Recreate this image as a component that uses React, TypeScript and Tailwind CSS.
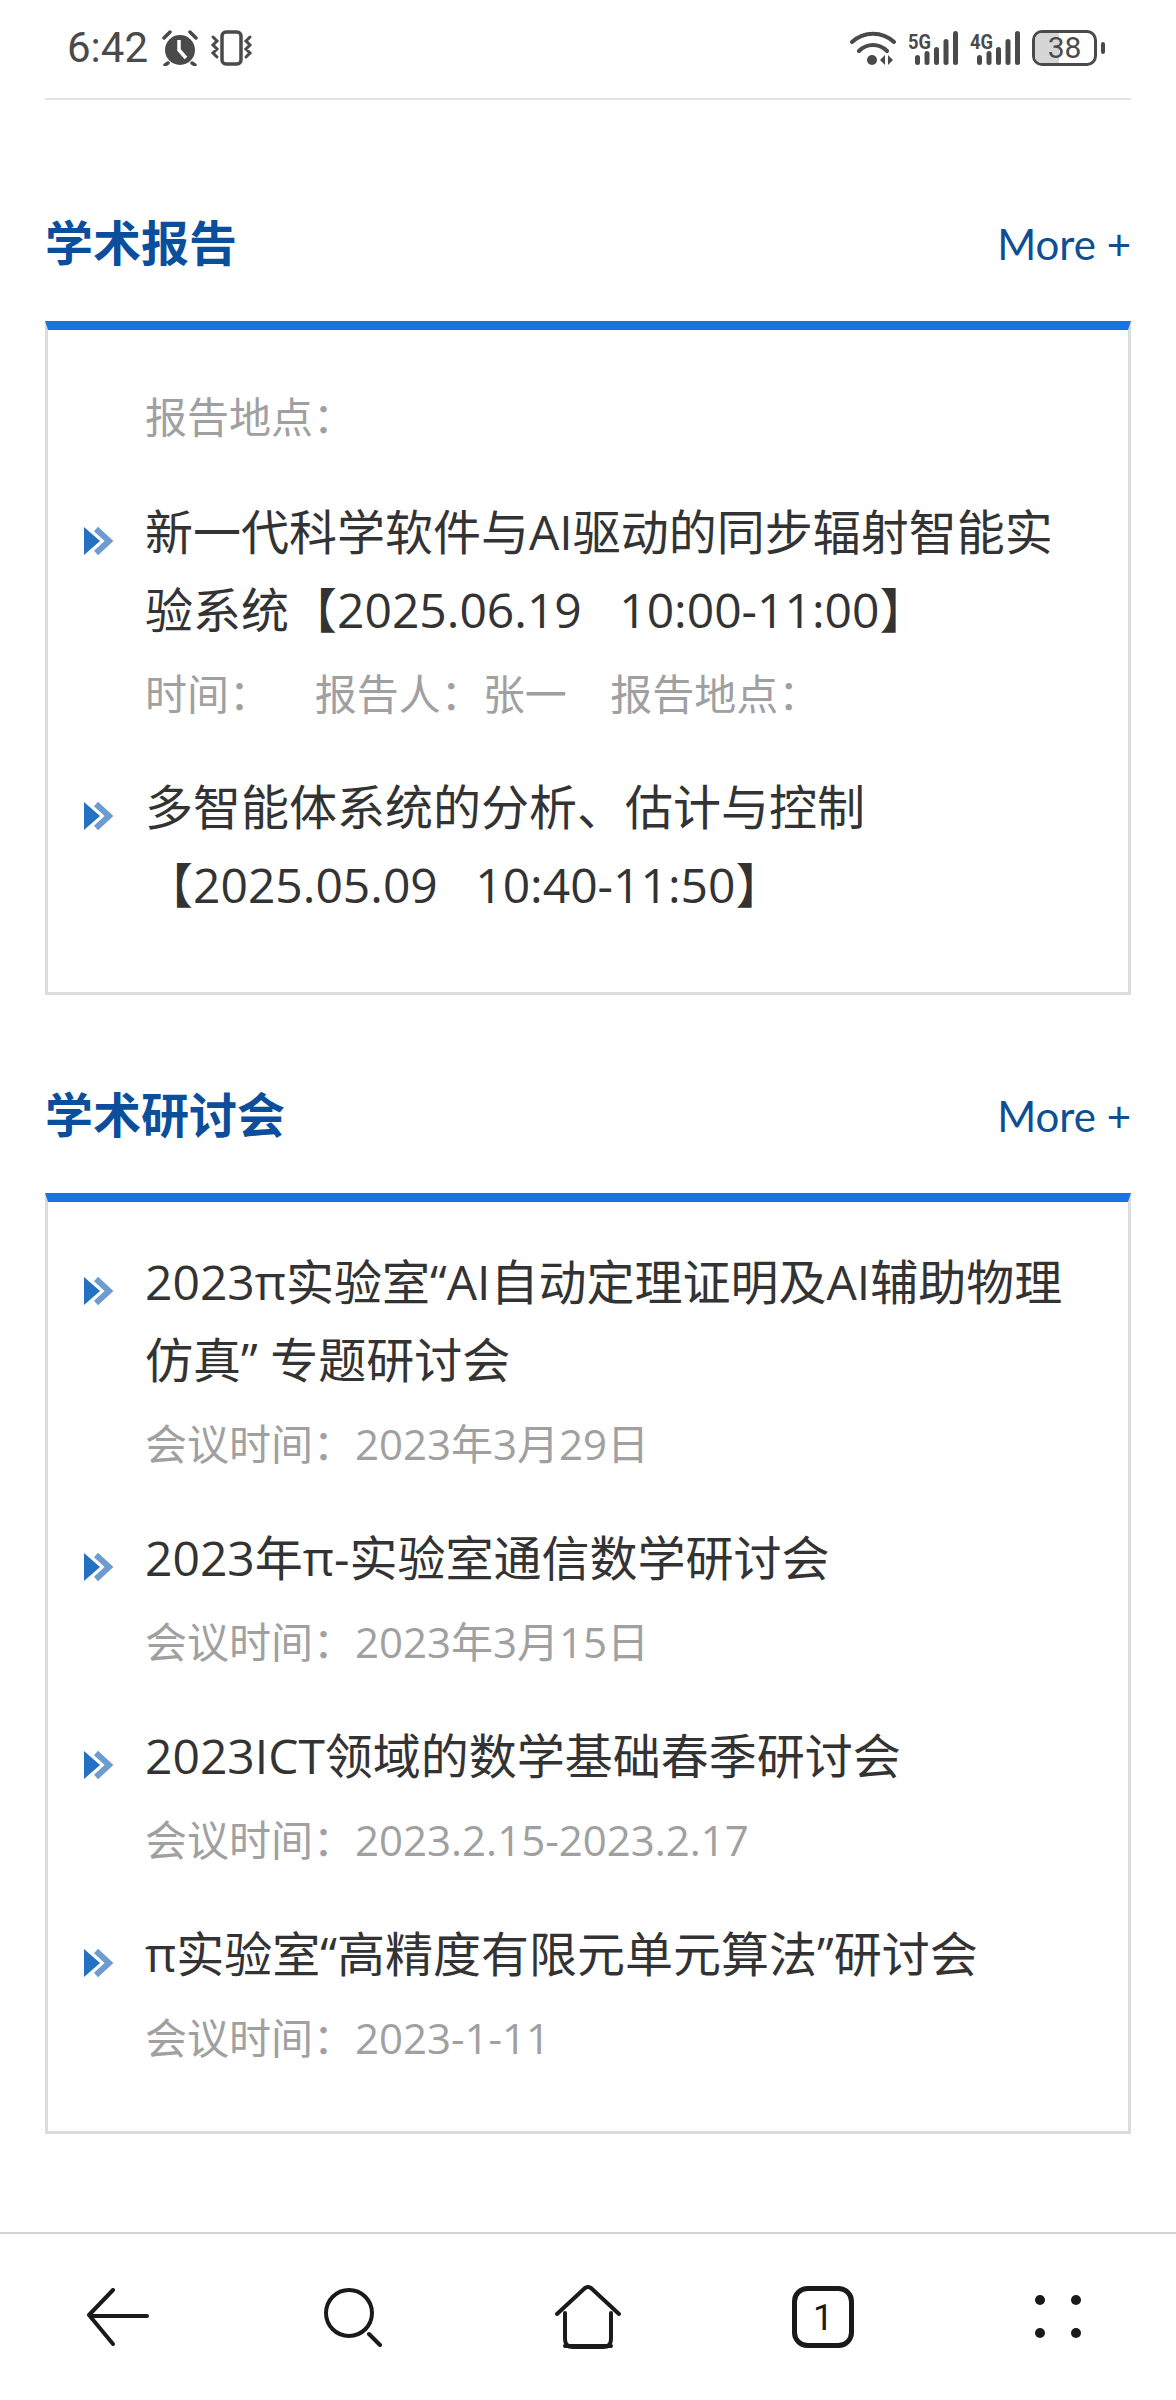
const cjk = "font-['Open_Sans','Noto_Sans_CJK_SC',sans-serif]";

function Bullet() {
  return (
    <svg width="32" height="30" viewBox="0 0 32 30" className="shrink-0 mt-[33px]">
      <path d="M2 1 L18 15 L2 29 Z" fill="#2470c2" />
      <path d="M14 3 L27 15 L14 27" fill="none" stroke="#6f9cd0" strokeWidth="6" />
    </svg>
  );
}

function Bars({ label }: { label: string }) {
  return (
    <svg width="50" height="36" viewBox="0 0 50 36" fill="#4a4a4a">
      <text x="0" y="19" fontSize="20" fontWeight="700" fontFamily="Roboto, sans-serif" textLength="23" lengthAdjust="spacingAndGlyphs">{label}</text>
      <rect x="7" y="25" width="5" height="10" rx="2.5" />
      <rect x="16.5" y="21" width="5" height="14" rx="2.5" />
      <rect x="26" y="17" width="5" height="18" rx="2.5" />
      <rect x="35.5" y="9" width="5" height="26" rx="2.5" />
      <rect x="45" y="1" width="5" height="34" rx="2.5" />
    </svg>
  );
}

function StatusBar() {
  return (
    <div className="mx-[45px] h-[100px] border-b-2 border-[#e3e3e3] flex items-center justify-between pl-[22px] pr-[26px] pb-[2px]">
      <div className="flex items-center">
        <span className="font-['Roboto',sans-serif] text-[42px] leading-none text-[#4a4a4a] w-[94px]">6:42</span>
        <svg width="38" height="36" viewBox="0 0 38 36" className="shrink-0">
          <circle cx="19" cy="20" r="15" fill="#4a4a4a" />
          <path d="M18 10 V20 L25 28" fill="none" stroke="#fff" strokeWidth="3.5" />
          <path d="M3 8 L9 2 M35 8 L29 2 M7 33 L4 35 M31 33 L34 35" stroke="#4a4a4a" strokeWidth="3.5" strokeLinecap="round" />
        </svg>
        <svg width="44" height="36" viewBox="0 0 44 36" className="ml-[11px] shrink-0">
          <rect x="12" y="2" width="19" height="32" rx="4" fill="none" stroke="#4a4a4a" strokeWidth="3.5" />
          <path d="M3 7 L7 11 L3 15 L7 19 L3 23 L7 27 M40 7 L36 11 L40 15 L36 19 L40 23 L36 27" fill="none" stroke="#4a4a4a" strokeWidth="3" strokeLinecap="round" />
        </svg>
      </div>
      <div className="flex items-center">
        <svg width="46" height="36" viewBox="0 0 46 36">
          <path d="M2 12 C14 1 32 1 44 12 M9 21 C17 13 29 13 37 21" fill="none" stroke="#4a4a4a" strokeWidth="4" strokeLinecap="round" />
          <circle cx="22" cy="30" r="5" fill="#4a4a4a" />
          <path d="M35 25 L30 30 L35 35 Z M38 25 L43 30 L38 35 Z" fill="#4a4a4a" />
        </svg>
        <div className="ml-[12px]"><Bars label="5G" /></div>
        <div className="ml-[12px]"><Bars label="4G" /></div>
        <div className="ml-[12px] relative w-[65px] h-[36px] rounded-[10px] border-[3px] border-[#4a4a4a] overflow-hidden flex items-center justify-center">
          <div className="absolute left-0 top-0 bottom-0 w-[24px] bg-[#d6d6d6]" />
          <span className="relative font-['Roboto',sans-serif] text-[30px] leading-none text-[#4a4a4a]">38</span>
        </div>
        <div className="ml-[4px] w-[4px] h-[12px] rounded-full bg-[#4a4a4a]" />
      </div>
    </div>
  );
}

function Section({ title, className, children }: { title: string; className: string; children: React.ReactNode }) {
  return (
    <section className={"mx-[45px] " + className}>
      <div className="h-[154px] flex items-center justify-between">
        <h2 className="text-[48px] font-bold text-[#0b4e9b] leading-none -mt-[3px]">{title}</h2>
        <a className="font-['Lato',sans-serif] text-[42px] leading-none text-[#0d4f93]">More +</a>
      </div>
      {children}
    </section>
  );
}

function Item({ title, meta }: { title: string; meta?: string }) {
  return (
    <div className="flex gap-[31px]">
      <Bullet />
      <div className="min-w-0 flex-1">
        <div className="text-[48px] leading-[78px] text-[#333] whitespace-pre-wrap">{title}</div>
        {meta && <div className="mt-[15px] text-[42px] leading-[60px] text-[#a0a0a0] whitespace-pre">{meta}</div>}
      </div>
    </div>
  );
}

function BottomNav() {
  return (
    <div className="mt-[98px] h-[168px] border-t-2 border-[#d4d4d4] grid grid-cols-5 items-center justify-items-center text-[#1a1a1a]">
      <svg width="64" height="58" viewBox="0 0 64 58" fill="none" stroke="currentColor" strokeWidth="4" strokeLinecap="round" strokeLinejoin="round">
        <path d="M27 2 L3 27 L27 56 M5 28 H61" />
      </svg>
      <svg width="60" height="60" viewBox="0 0 60 60" fill="none" stroke="currentColor" strokeWidth="4" strokeLinecap="round">
        <circle cx="26" cy="26" r="23" />
        <path d="M46 47 L57 58" />
      </svg>
      <svg width="66" height="64" viewBox="0 0 66 64" fill="none" stroke="currentColor" strokeWidth="4" strokeLinecap="round" strokeLinejoin="round">
        <path d="M2 29 L30 3 Q33 1 36 3 L64 29" />
        <path d="M10 28 V54 Q10 62 18 62 H48 Q56 62 56 54 V28 M10 61 H56" />
      </svg>
      <svg width="62" height="62" viewBox="0 0 62 62" fill="none">
        <rect x="2.5" y="2.5" width="57" height="57" rx="13" stroke="currentColor" strokeWidth="5" />
        <text x="31" y="44" fontSize="36" textAnchor="middle" fill="currentColor" fontFamily="Roboto, sans-serif">1</text>
      </svg>
      <svg width="46" height="46" viewBox="0 0 46 46" fill="currentColor">
        <circle cx="5" cy="6" r="5" />
        <circle cx="41" cy="6" r="5" />
        <circle cx="5" cy="39" r="5" />
        <circle cx="41" cy="39" r="5" />
      </svg>
    </div>
  );
}

export default function App() {
  return (
    <div className={"w-[1176px] h-[2400px] bg-white overflow-hidden " + cjk}>
      <StatusBar />
      <Section title="学术报告" className="mt-[67px]">
        <div className="border-t-[9px] border-x-[3px] border-b-[3px] border-t-[#1a73e0] border-x-[#dcdcdc] border-b-[#dcdcdc] pl-[34px] pr-[38px] pt-[57px] pb-[68px]">
          <div className="pl-[63px] text-[42px] leading-[60px] text-[#a0a0a0]">报告地点：</div>
          <div className="mt-[46px] flex flex-col gap-[44px]">
            <Item
              title={"新一代科学软件与AI驱动的同步辐射智能实验系统【2025.06.19   10:00-11:00】"}
              meta={"时间：    报告人：张一    报告地点："}
            />
            <Item title={"多智能体系统的分析、估计与控制【2025.05.09   10:40-11:50】"} />
          </div>
        </div>
      </Section>
      <Section title="学术研讨会" className="mt-[44px]">
        <div className="border-t-[9px] border-x-[3px] border-b-[3px] border-t-[#1a73e0] border-x-[#dcdcdc] border-b-[#dcdcdc] pl-[34px] pr-[38px] pt-[41px] pb-[63px] flex flex-col gap-[45px]">
          <Item title={"2023π实验室“AI自动定理证明及AI辅助物理仿真” 专题研讨会"} meta="会议时间：2023年3月29日" />
          <Item title="2023年π-实验室通信数学研讨会" meta="会议时间：2023年3月15日" />
          <Item title="2023ICT领域的数学基础春季研讨会" meta="会议时间：2023.2.15-2023.2.17" />
          <Item title="π实验室“高精度有限元单元算法”研讨会" meta="会议时间：2023-1-11" />
        </div>
      </Section>
      <BottomNav />
    </div>
  );
}
